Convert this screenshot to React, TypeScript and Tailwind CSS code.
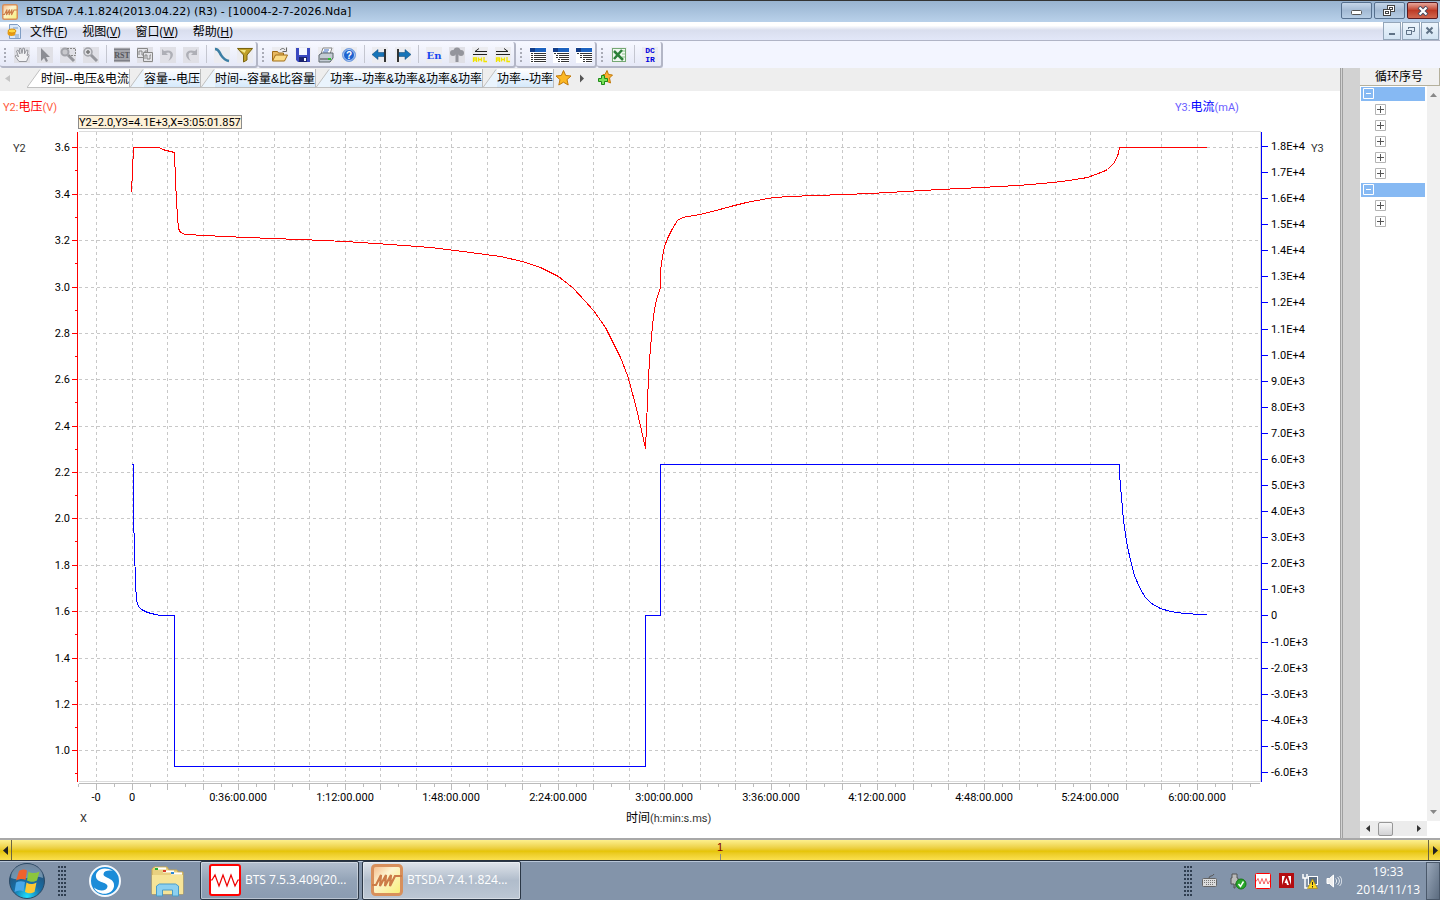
import type { ReactNode } from "react";

const UI = "font-['Open_Sans','Noto_Sans_CJK_SC',sans-serif]";
const ARIAL = "font-['Liberation_Sans','Noto_Sans_CJK_SC',sans-serif]";

/* ---------- shared drawings ---------- */

function WaveLogo({ size }: { size: number }) {
    return (
        <svg width={size} height={size} viewBox="0 0 32 32" className="shrink-0">
            <defs>
                <linearGradient id={"wl" + size} x1="0" y1="0" x2="1" y2="1">
                    <stop offset="0" stopColor="#f4b888" />
                    <stop offset="0.4" stopColor="#fdf4d0" />
                    <stop offset="1" stopColor="#f8f070" />
                </linearGradient>
            </defs>
            <rect x="1.5" y="1.5" width="29" height="29" rx="3" fill={"url(#wl" + size + ")"} stroke="#d8905c" strokeWidth="3" />
            <path d="M1 21h4l5-10-1 11 6-11-1 11 6-11-1 11 5-10h7" fill="none" stroke="#cc7c48" strokeWidth="2.2" />
        </svg>
    );
}

function RedWave({ size }: { size: number }) {
    return (
        <svg width={size} height={size} viewBox="0 0 32 32" className="shrink-0">
            <rect x="1" y="1" width="30" height="30" rx="2" fill="#fff" stroke="#f00" strokeWidth="2" />
            <path d="M1 16h2l3-5 4 11 4-11 4 11 4-11 4 11 3-6h3" fill="none" stroke="#e00" strokeWidth="1.2" />
        </svg>
    );
}

/* ---------- title + menu ---------- */

const winBtn = "flex h-[17px] w-[31px] items-center justify-center rounded-[2px] border border-[#56708e] bg-linear-to-b from-[#c5d6e9] via-[#a3bad4] to-[#b7cde4]";

function TitleBar() {
    return (
        <header className="flex h-[22px] shrink-0 items-center border-t border-[#333] bg-linear-to-b from-[#98b3d0] to-[#b9d1ea] pr-0.5 pl-0.5 text-black">
            <WaveLogo size={16} />
            <h1 className="ml-2 flex-1 font-['DejaVu_Sans',sans-serif] text-[11px] leading-5 whitespace-nowrap">BTSDA 7.4.1.824(2013.04.22) (R3) - [10004-2-7-2026.Nda]</h1>
            <div className="flex gap-0.5 pb-0.5">
                <button aria-label="Minimize" className={winBtn}>
                    <svg width="12" height="10"><rect x="0.5" y="4.5" width="10" height="4" rx="1" fill="#fff" stroke="#555" /></svg>
                </button>
                <button aria-label="Restore" className={winBtn}>
                    <svg width="13" height="12" fill="#fff" stroke="#444">
                        <rect x="4.5" y="0.5" width="7" height="6" />
                        <rect x="6.5" y="2.5" width="3" height="2" />
                        <rect x="0.5" y="4.5" width="7" height="6" />
                        <rect x="2.5" y="6.5" width="3" height="2" />
                    </svg>
                </button>
                <button aria-label="Close" className="flex h-[17px] w-[31px] items-center justify-center rounded-[2px] border border-[#5a1a20] bg-linear-to-b from-[#e6a59a] via-[#bd3a26] to-[#d0674f]">
                    <svg width="12" height="10">
                        <path d="M2 1l8 8M10 1l-8 8" stroke="#444a60" strokeWidth="4" />
                        <path d="M2.5 1.5l7 7M9.5 1.5l-7 7" stroke="#fff" strokeWidth="2.2" />
                    </svg>
                </button>
            </div>
        </header>
    );
}

const menus = [
    ["文件", "F"],
    ["视图", "V"],
    ["窗口", "W"],
    ["帮助", "H"],
];

const mdiBtn = "flex h-[18px] w-[18px] items-center justify-center border border-[#93a5b8] bg-linear-to-b from-[#edf5fc] to-[#d3e4f3]";

function MenuBar() {
    return (
        <nav className={"flex h-[19px] shrink-0 items-center border-b border-[#b0b4c6] bg-linear-to-b from-white from-20% via-[#d9deee] via-45% to-[#e2e7f8] pl-[7px] " + UI}>
            <svg width="14" height="15" viewBox="0 0 14 15" className="shrink-0">
                <path d="M2.5.5h8l3 3v11h-11z" fill="#dce9f8" stroke="#7f9dc4" />
                <path d="M6 4h5M6 11h6M8 13h4" stroke="#7f9dc4" />
                <ellipse cx="4.5" cy="9" rx="4" ry="3" fill="#e89a10" />
                <ellipse cx="5" cy="7" rx="4" ry="2" fill="#ffd840" stroke="#d88c10" />
            </svg>
            <div className="ml-[9px] flex flex-1 gap-[15px] pt-0.5 text-[12px] leading-4">
                {menus.map(([label, key]) => (
                    <button key={key} className="whitespace-nowrap">
                        {label}(<u>{key}</u>)
                    </button>
                ))}
            </div>
            <div className="flex gap-px pr-px">
                <button aria-label="Minimize document" className={mdiBtn}>
                    <svg width="10" height="10"><path d="M2 8h6" stroke="#5f7286" strokeWidth="2" /></svg>
                </button>
                <button aria-label="Restore document" className={mdiBtn}>
                    <svg width="10" height="10" fill="none" stroke="#5f7286"><path d="M2.5 3v-1.500h6v4h-2M2 1.5h7M.5 4.5h5v4h-5zM0 4.5h6" /></svg>
                </button>
                <button aria-label="Close document" className={mdiBtn}>
                    <svg width="10" height="10"><path d="M1.5 1.5l6 6M7.5 1.5l-6 6" stroke="#5f7286" strokeWidth="2" /></svg>
                </button>
            </div>
        </nav>
    );
}

/* ---------- toolbar ---------- */

function Tool({ label, children, muted = false }: { label: string; children: ReactNode; muted?: boolean }) {
    return (
        <button aria-label={label} className="flex w-[23px] items-center justify-center pt-0.5">
            <svg width="16" height="16" viewBox="0 0 16 16" className={muted ? "bg-[#e0e0e6]" : "bg-[#ececf0]"}>
                {children}
            </svg>
        </button>
    );
}

function Sep() {
    return (
        <div className="flex w-2 justify-center">
            <div className="h-[18px] w-px self-center bg-[#c4c6d0]" />
        </div>
    );
}

function ToolGroup({ children }: { children: ReactNode }) {
    return (
        <div className="flex rounded-[3px] border-r-2 border-b-2 border-[#b3b6c6] bg-linear-to-b from-[#f7f8ff] to-[#e6e9f7]">
            <svg width="10" height="24" fill="#a9abb6">
                {[6, 10, 14, 18].map((y) => (
                    <rect key={y} x="4" y={y} width="2" height="2" />
                ))}
            </svg>
            {children}
        </div>
    );
}

function TableIcon({ indent }: { indent: number }) {
    return (
        <g shapeRendering="crispEdges">
            <rect width="16" height="16" fill="#fff" />
            <rect x="0" y="1" width="16" height="4" fill="#1c62c0" />
            <rect x="0" y="1" width="5" height="4" fill="#123c88" />
            <path
                d={`M1 6.5h15M${1 + indent} 8.5h15M${1 + indent} 10.5h15M${1 + indent * 2} 12.5h15M${1 + indent * 2} 14.5h15`}
                stroke="#333"
                strokeDasharray="2 1 12 2"
            />
        </g>
    );
}

function Toolbar() {
    return (
        <div className="flex h-[27px] shrink-0 bg-[#f3f5ff] pt-px" role="toolbar">
            <ToolGroup>
                <Tool label="Pan" muted>
                    <path d="M5 14.500l-4-5.500 1.500-1 2 2-2-6 1.500-1 2 4L5.500 1.500h1.500l1 5 1-5.500 1.500.5V7l2-4 1.500.5-1 5 1.500-1 .5 1-2.500 6z" fill="#f2f2f4" stroke="#95969c" />
                </Tool>
                <Tool label="Select" muted>
                    <path d="M4 1v13l3-3 2 4 2-1-2-4h4z" fill="#8c8d94" />
                </Tool>
                <Tool label="Zoom area" muted>
                    <circle cx="5" cy="5" r="3.5" fill="#c8c8cc" stroke="#a2a3a9" strokeWidth="2" />
                    <path d="M8 8l6 6" stroke="#96979d" strokeWidth="3" />
                    <path d="M7 1.5h8.500v7H9" fill="none" stroke="#888" strokeDasharray="2 1" />
                </Tool>
                <Tool label="Zoom" muted>
                    <circle cx="5" cy="5" r="4" fill="#dcdce0" stroke="#a2a3a9" strokeWidth="1.5" />
                    <path d="M8 8l6 6" stroke="#96979d" strokeWidth="3" />
                    <path d="M3 5h4M5 3v4" stroke="#777" strokeWidth="1.5" />
                </Tool>
                <Sep />
                <Tool label="Reset" muted>
                    <rect y="1" width="16" height="14" fill="#a4a5ab" />
                    <path d="M0 2.5h16M0 13.500h16" stroke="#808188" />
                    <text x="8" y="11" textAnchor="middle" className="font-['Liberation_Serif',serif] text-[8px] font-bold" fill="#55565c">RST</text>
                </Tool>
                <Tool label="Copy curves" muted>
                    <path d="M.5 1.500h10v9H.5z" fill="#e4e4e8" stroke="#888" />
                    <path d="M2 8V4h3v4h3V4h2" fill="none" stroke="#888" />
                    <path d="M6.500 5.500h9v9h-9z" fill="#e4e4e8" stroke="#888" />
                    <path d="M8 12V8h2v4h3V8h1" fill="none" stroke="#888" />
                </Tool>
                <Tool label="Undo" muted>
                    <path d="M2 2v6h6L6 6c4-2 6 1 3 7l-1 1c8-4 6-13-4-10z" fill="#aeafb6" />
                </Tool>
                <Tool label="Redo" muted>
                    <path d="M14 2v6H8l2-2c-4-2-6 1-3 7l1 1C0 10 2 1 12 4z" fill="#aeafb6" />
                </Tool>
                <Sep />
                <Tool label="Curve">
                    <path d="M1 2c4 0 4 3 6 6s3 5 8 6" fill="none" stroke="#3c7ea4" strokeWidth="2.5" />
                </Tool>
                <Tool label="Filter">
                    <path d="M.5 1.500h15L10 8v5l-3.500 2V8z" fill="#c0a028" stroke="#7a6410" />
                    <path d="M3 3h6L7.500 6z" fill="#f4e888" />
                </Tool>
            </ToolGroup>
            <ToolGroup>
                <Tool label="Open">
                    <path d="M.5 13.500v-9h5l1 1.500h5v3" fill="#e8b860" stroke="#a06c18" />
                    <path d="M.5 14l3-6h12l-3 6z" fill="#fbdc88" stroke="#a06c18" />
                    <path d="M8 3c2-2 4-2 5 0M14.500.5v4h-4" fill="none" stroke="#666" />
                </Tool>
                <Tool label="Save">
                    <path d="M1 1h14v14H3l-2-2z" fill="#3a48c0" />
                    <rect x="4" y="1" width="8" height="7" fill="#f4f6ff" />
                    <rect x="4" y="10" width="8" height="5" fill="#1c2470" />
                    <rect x="9" y="11" width="2" height="3" fill="#fff" />
                </Tool>
                <Tool label="Print">
                    <path d="M5 1h9l-2 6H3z" fill="#fff" stroke="#888" />
                    <path d="M6 3h5M5 5h5" stroke="#3a68c0" />
                    <path d="M1 8l3-2h11v5l-3 4H1z" fill="#c4ccd4" stroke="#5a646c" />
                    <path d="M2 12h9" stroke="#444" />
                    <rect x="10" y="11" width="3" height="2" fill="#2ac030" />
                </Tool>
                <Tool label="Help">
                    <circle cx="8" cy="8" r="6.5" fill="#1d62d0" stroke="#7fa4e0" />
                    <circle cx="8" cy="8" r="5.5" fill="none" stroke="#dce8fa" strokeWidth="0.8" />
                    <text x="8" y="12" textAnchor="middle" className="font-['Liberation_Sans',sans-serif] text-[10px] font-bold" fill="#fff">?</text>
                </Tool>
                <Sep />
                <Tool label="Previous">
                    <path d="M13 2v13" stroke="#333" strokeWidth="2" />
                    <path d="M0 7.500l6-5v3h6v4H6v3z" fill="#1774b8" stroke="#0c4474" strokeWidth="0.5" />
                </Tool>
                <Tool label="Next">
                    <path d="M3 2v13" stroke="#333" strokeWidth="2" />
                    <path d="M16 7.500l-6-5v3H4v4h6v3z" fill="#1774b8" stroke="#0c4474" strokeWidth="0.5" />
                </Tool>
                <Sep />
                <Tool label="Language">
                    <text x="8" y="12" textAnchor="middle" className="font-['DejaVu_Serif',serif] text-[10px] font-bold" fill="#1646f0">En</text>
                </Tool>
                <Tool label="Tree" muted>
                    <circle cx="8" cy="4" r="3.5" fill="#94959c" />
                    <circle cx="4" cy="6" r="3" fill="#94959c" />
                    <circle cx="12" cy="6" r="3" fill="#94959c" />
                    <path d="M6.500 7h3v8h-3z" fill="#94959c" />
                </Tool>
                <Tool label="Charge left">
                    <path d="M15 4.500H3l4-3M1 7.500h14" fill="none" stroke="#222" />
                    <path d="M1.500 15v-4h3v4M1.500 13h3M6.500 10.500v4M9.500 10.500v4M6.500 12.500h3M12 10v4.500h3" fill="none" stroke="#f0e400" strokeWidth="1.3" />
                </Tool>
                <Tool label="Charge right">
                    <path d="M1 4.500h12l-4-3M1 7.500h14" fill="none" stroke="#222" />
                    <path d="M1.500 15v-4h3v4M1.500 13h3M6.500 10.500v4M9.500 10.500v4M6.500 12.500h3M12 10v4.500h3" fill="none" stroke="#f0e400" strokeWidth="1.3" />
                </Tool>
            </ToolGroup>
            <ToolGroup>
                <Tool label="Cycle layer"><TableIcon indent={0} /></Tool>
                <Tool label="Step layer"><TableIcon indent={2} /></Tool>
                <Tool label="Record layer"><TableIcon indent={3} /></Tool>
            </ToolGroup>
            <ToolGroup>
                <Tool label="Export to Excel">
                    <rect x="1.5" y="1.5" width="13" height="13" fill="#f0f8f0" stroke="#74a874" />
                    <path d="M11 4h3M11 7h3M11 10h3" stroke="#8cc08c" />
                    <path d="M3 4l9 9M11 3l-8 9" stroke="#2c8038" strokeWidth="2.5" />
                </Tool>
                <Sep />
                <Tool label="DCIR">
                    <text x="8" y="6" textAnchor="middle" className="font-['Liberation_Mono',monospace] text-[8px] font-bold" fill="#0000e0">DC</text>
                    <text x="8" y="15" textAnchor="middle" className="font-['Liberation_Mono',monospace] text-[8px] font-bold" fill="#0000e0">IR</text>
                </Tool>
            </ToolGroup>
        </div>
    );
}

/* ---------- tabs ---------- */

const tabs = ["时间--电压&电流", "容量--电压", "时间--容量&比容量", "功率--功率&功率&功率&功率", "功率--功率"];

function Tabs() {
    return (
        <div className={"flex h-[23px] shrink-0 items-start bg-[#eeeeee] pt-px text-[12px] " + ARIAL}>
            <svg width="27" height="18"><path d="M10 6v7L5 9.500z" fill="#c4c4c4" /></svg>
            {tabs.map((tab, i) => (
                <button key={tab} className="flex h-[19px] whitespace-nowrap">
                    <svg width="14" height="19">
                        <path d="M0 18.500L13 0.500h2v18z" fill={i === 0 ? "#fff" : "#eaf4fd"} />
                        <path d="M0 18.500L13 0.500M0 18.500h14" stroke="#c0c0c0" />
                    </svg>
                    <span
                        className={
                            "h-[19px] border-r border-b border-[#bcbcbc] leading-5 " +
                            (i === 0 ? "bg-white" : "bg-linear-to-b from-white to-[#d5e9fb]")
                        }
                    >
                        {tab}
                    </span>
                </button>
            ))}
            <button aria-label="Favourite" className="ml-px">
                <svg width="17" height="18" viewBox="0 0 17 18">
                    <path d="M8.500 1.500l2.200 5 5.300.5-4 3.600 1.200 5.400-4.700-2.800L3.800 16 5 10.600 1 7l5.300-.5z" fill="#fcb824" stroke="#c07808" />
                </svg>
            </button>
            <svg width="16" height="18"><path d="M8 5.500v8l4-4z" fill="#555" /></svg>
            <button aria-label="Add favourite" className="ml-2">
                <svg width="18" height="18" viewBox="0 0 18 18">
                    <path d="M11 1.500l1.500 4 4 .5-3 3 1 5-4.500-2-3 1V5.500h2z" fill="#fcb030" stroke="#c07808" />
                    <path d="M5.500 6.500h3v3h3v3h-3v3h-3v-3h-3v-3h3z" fill="#78e058" stroke="#1e8a18" />
                </svg>
            </button>
        </div>
    );
}

/* ---------- chart ---------- */

const voltTicks = [147, 194, 240, 287, 333, 379, 426, 472, 518, 565, 611, 658, 704, 750];
const gridX = Array.from({ length: 33 }, (_, i) => Math.floor(96.5 + 35.5 * i));
const currents = Array.from({ length: 25 }, (_, i) => 18 - i);
const times = ["0", "0:36:00.000", "1:12:00.000", "1:48:00.000", "2:24:00.000", "3:00:00.000", "3:36:00.000", "4:12:00.000", "4:48:00.000", "5:24:00.000", "6:00:00.000"];

const voltage =
    "131,192 132,170 133,147 159,147 162,149 174,152 175,180 176,200 177,217 178,228 180,232 185,234 205,235 223,236 247,237 271,238 300,239 345,241 390,244 430,247 470,252 500,256 522,261 540,267 558,276 572,287 585,301 593,310 605,327 613,343 620,357 627,375 629,382 636,408 641,430 645,448 " +
    "646,425 647,400 648,378 649,360 651,336 653,315 656,299 660,287 660,270 662,256 664,246 667,238 672,228 677,220 682,217 699,214 712,211 730,206 746,202 767,198 774,197 789,196 815,195 845,194 869,193 889,192 905,191 922,190 940,189 960,188 981,187 999,186 1017,185 1031,184 1040,183 1053,182 1069,180 1087,177 1103,171 1107,169 1114,162 1118,153 1119,147 1206,147";

const current =
    "131,464 133,464 133,515 134,549 135,582 136,600 138,606 141,609 147,612 155,614 160,615 174,615 174,766 645,766 645,615 660,615 660,464 1119,464 1119,474 1121,497 1123,520 1126,541 1130,560 1134,575 1139,587 1145,597 1151,603 1160,608 1170,611 1184,613 1200,614 1206,614";

function currentLabel(k: number) {
    if (k === 0) return "0";
    return Math.abs(k) >= 10 ? `${(k / 10).toFixed(1)}E+4` : `${k.toFixed(1)}E+3`;
}

function currentY(i: number) {
    return Math.round(146 + 26.08 * i);
}

function Chart() {
    return (
        <svg viewBox="0 91 1340 747" className="block min-h-0 w-full flex-1 bg-white font-['Roboto','Noto_Sans_CJK_SC',sans-serif] text-[11px]">
            {/* grid and frame */}
            <g transform="translate(0.5 0.5)" fill="none" shapeRendering="crispEdges">
                <path d="M78 131H1260V781H78" stroke="#dcdcdc" />
                <g stroke="#c8c8c8" strokeDasharray="3 3">
                    {voltTicks.map((y) => <path key={y} d={`M78 ${y}H1259`} />)}
                    {gridX.map((x) => <path key={x} d={`M${x} 131V781`} />)}
                </g>
                <path d="M78 783H1259" stroke="#bbb" />
                {gridX.map((x) => <path key={x} d={`M${x} 783v6M${x + 18} 783v3`} stroke="#bbb" />)}
                <path d="M78 783v3" stroke="#bbb" />
                <path d="M77 131V781" stroke="#f00" />
                {voltTicks.map((y) => <path key={y} d={`M71 ${y}h6M74 ${y + 23}h3`} stroke="#f00" />)}
                <path d="M1261 131V781" stroke="#00f" />
                {currents.map((k, i) => <path key={k} d={`M1261 ${currentY(i)}h6`} stroke="#00f" />)}
                <polyline points={voltage} stroke="#f00" />
                <polyline points={current} stroke="#00f" />
            </g>

            {/* axis labels */}
            {voltTicks.map((y, i) => (
                <text key={y} x="70" y={y + 4} textAnchor="end">{(3.6 - i * 0.2).toFixed(1)}</text>
            ))}
            {currents.map((k, i) => (
                <text key={k} x="1271" y={currentY(i) + 4}>{currentLabel(k)}</text>
            ))}
            <text x="96" y="801" textAnchor="middle">-0</text>
            {times.map((t, i) => (
                <text key={t} x={Math.floor(132 + 106.5 * i)} y="801" textAnchor="middle">{t}</text>
            ))}
            <text x="13" y="152" fill="#333">Y2</text>
            <text x="1311" y="152" fill="#333">Y3</text>
            <text x="80" y="822" fill="#333">X</text>
            <text x="626" y="822" fill="#333"><tspan className="text-[12px]" fill="#000">时间</tspan>(h:min:s.ms)</text>
            <text x="3" y="111" fill="#ff5a3c">Y2:<tspan className="text-[12px]" fill="#f00">电压</tspan>(V)</text>
            <text x="1175" y="111" fill="#6a5cff">Y3:<tspan className="text-[12px]" fill="#00f">电流</tspan>(mA)</text>

            {/* cursor readout */}
            <rect x="78.5" y="115.5" width="163" height="13" fill="#fdf1d8" stroke="#8c8c8c" />
            <text x="79" y="126">Y2=2.0,Y3=4.1E+3,X=3:05:01.857</text>
        </svg>
    );
}

/* ---------- cycle tree ---------- */

const tree = [5, 2];

function CyclePanel() {
    return (
        <aside className={"flex w-20 shrink-0 flex-col bg-white text-[12px] " + ARIAL}>
            <h2 className="h-[18px] border-r border-b border-[#b4b09c] bg-[#f0f0f0] pl-[15px] leading-[18px]">循环序号</h2>
            <div className="flex min-h-0 flex-1">
                <ul className="flex-1 pl-px">
                    {tree.map((n, i) => (
                        <li key={i} className="py-px">
                            <div className="mr-0.5 flex h-3.5 items-start bg-[#86b9f3] pt-px pl-0.5">
                                <button aria-label="Collapse">
                                    <svg width="11" height="11" className="block"><path d="M.5.5h10v10H.5zM3 5.500h5" fill="none" stroke="#fff" /></svg>
                                </button>
                            </div>
                            <ul>
                                {Array.from({ length: n }, (_, j) => (
                                    <li key={j} className="flex h-4 items-center pl-3.5">
                                        <button aria-label="Expand">
                                            <svg width="11" height="11" className="block" fill="none">
                                                <path d="M.5.5h10v10H.5z" stroke="#b4b4b4" />
                                                <path d="M2 5.500h7M5.500 2v7" stroke="#555" />
                                            </svg>
                                        </button>
                                    </li>
                                ))}
                            </ul>
                        </li>
                    ))}
                </ul>
                <div className="flex w-[13px] flex-col items-center justify-between bg-[#f0f0f0] py-[7px]">
                    <svg width="7" height="4"><path d="M0 4l3.500-4L7 4z" fill="#888" /></svg>
                    <svg width="7" height="4"><path d="M0 0l3.500 4L7 0z" fill="#888" /></svg>
                </div>
            </div>
            <div className="mr-[13px] mb-0.5 flex h-[15px] items-center bg-[#ececec] px-1.5">
                <svg width="4" height="7"><path d="M4 0v7L0 3.500z" fill="#333" /></svg>
                <div className="ml-2 h-3.5 w-[15px] rounded-[2px] border border-[#979797] bg-linear-to-b from-[#f6f6f6] to-[#d2d2d4]" />
                <svg width="4" height="7" className="ml-auto"><path d="M0 0v7l4-3.500z" fill="#333" /></svg>
            </div>
        </aside>
    );
}

/* ---------- cycle slider ---------- */

function CycleBar() {
    return (
        <div className={"flex h-[22px] shrink-0 border-t-2 border-[#a8a8a8] bg-linear-to-b from-[#fdf08c] via-[#e6c400] via-55% to-[#fbe04c] text-[11px] " + ARIAL}>
            <button aria-label="Previous cycle" className="flex w-3 items-center justify-center border-r border-[#6c6440]">
                <svg width="6" height="9"><path d="M5 0v9L0 4.500z" fill="#222" /></svg>
            </button>
            <div className="flex flex-1 flex-col items-center leading-[14px] text-[#800000]">
                1
                <div className="h-1.5 w-px bg-[#888]" />
            </div>
            <button aria-label="Next cycle" className="flex w-3 items-center justify-center border-l border-[#6c6440]">
                <svg width="6" height="9"><path d="M1 0v9l5-4.500z" fill="#222" /></svg>
            </button>
        </div>
    );
}

/* ---------- taskbar ---------- */

function DotGrip() {
    return (
        <svg width="9" height="32" fill="#2f3e50">
            {[0, 3, 6].map((x) =>
                Array.from({ length: 8 }, (_, i) => <rect key={x + "-" + i} x={x} y={1 + i * 4} width="2" height="2" />)
            )}
        </svg>
    );
}

const taskBtn = "flex h-[39px] w-[159px] items-center gap-1 rounded-[2px] border border-[#2b3746] pb-0.5 pl-2 shadow-[inset_0_0_0_1px_#ffffff66]";

function TaskBar() {
    return (
        <footer className={"flex h-10 shrink-0 items-center border-t border-[#26303c] bg-[#8394aa] text-[12px] text-white shadow-[inset_0_1px_0_#b8c6d8] " + UI}>
            <button aria-label="Start" className="ml-2">
                <svg width="38" height="38" viewBox="0 0 38 38" className="block">
                    <defs>
                        <radialGradient id="orb" cx="0.5" cy="0.95" r="0.9">
                            <stop offset="0" stopColor="#20e0ff" />
                            <stop offset="0.45" stopColor="#1670a8" />
                            <stop offset="1" stopColor="#2a4a6c" />
                        </radialGradient>
                    </defs>
                    <circle cx="19" cy="19" r="17.5" fill="url(#orb)" stroke="#2c4a66" />
                    <path d="M3 16a16 14 0 0 1 32 0c-10-4-22 4-32 0z" fill="#fff" opacity="0.35" />
                    <path d="M11 9c3-2 6-2 8-.5L17.500 18c-3-1.500-6-1-9.500.5z" fill="#f0622c" />
                    <path d="M20.500 9.500c3 2 7 2 11 0L29 18.500c-4 2-6 1.500-10 0z" fill="#8cc63c" />
                    <path d="M8 20.500c3-1.500 6-1.500 9-.5l-1.500 9.500c-3-1.500-6-1-9 .5z" fill="#4aa8e8" />
                    <path d="M18.500 20.500c3 2 6 2 10 0l-2 9.500c-4 2-6 1.500-9.500 0z" fill="#fcc834" />
                </svg>
            </button>
            <div className="ml-3"><DotGrip /></div>
            <button aria-label="Browser" className="ml-[22px]">
                <svg width="32" height="32" viewBox="0 0 32 32" className="block">
                    <circle cx="16" cy="16" r="15" fill="#1c8cd8" stroke="#f4f8fc" strokeWidth="2" />
                    <path d="M24 6C14 0 6 6 7 12c1 6 12 5 11.500 9.500-.5 5-9 5-13.500 1 3 8 18 9 20-1 1.500-9-11-8-10.500-12.500C15 5.500 20 5 24 6z" fill="#fff" />
                </svg>
            </button>
            <button aria-label="Explorer" className="ml-[30px]">
                <svg width="33" height="32" viewBox="0 0 33 32" className="block">
                    <path d="M1 4l2-2h13l2 3h8l1 2h5v22H1z" fill="#e8d080" stroke="#c8a850" />
                    <path d="M4 3.500h11M12 6.500h11M20 8.500h11" stroke="#fff" strokeWidth="2" />
                    <rect x="4" y="3" width="3" height="2" fill="#28b030" />
                    <rect x="12" y="5" width="3" height="2" fill="#d83c28" />
                    <rect x="20" y="7" width="3" height="2" fill="#2c88d8" />
                    <path d="M1 10h31v19H1z" fill="#f6e498" />
                    <path d="M5.500 31V21l3-2h16l3 2v10h-6v-6h-10v6z" fill="#8cd0f0" stroke="#4a9cc8" />
                </svg>
            </button>
            <button className={"ml-4 bg-linear-to-b from-[#b4c0cf] via-[#93a3b7] to-[#8a9bb1] " + taskBtn}>
                <RedWave size={32} />
                <span>BTS 7.5.3.409(20...</span>
            </button>
            <button className={"ml-[3px] bg-linear-to-b from-[#dfe4ea] via-[#b0bccb] to-[#bcc7d4] " + taskBtn}>
                <WaveLogo size={32} />
                <span>BTSDA 7.4.1.824...</span>
            </button>
            <div className="ml-auto flex items-center gap-2">
                <DotGrip />
                <svg width="17" height="17" viewBox="0 0 17 17">
                    <path d="M8 6c0-3 4-1 5-4" fill="none" stroke="#555" />
                    <rect x="1.5" y="6.5" width="14" height="8" rx="1" fill="#ddd" stroke="#666" />
                    <path d="M3 8.500h11M3 10.500h11M5 12.500h7" stroke="#777" strokeDasharray="1 1" />
                </svg>
            </div>
            <div className="ml-3 flex items-center gap-2">
                <svg width="17" height="18" viewBox="0 0 17 18">
                    <path d="M2 2h5v4h1v6H5v4H4v-4H1V6h1z" fill="#bbb" stroke="#555" />
                    <circle cx="11" cy="12" r="5" fill="#28a828" stroke="#187818" />
                    <path d="M8.500 12l2 2.500 3-5" fill="none" stroke="#fff" strokeWidth="1.5" />
                </svg>
                <RedWave size={16} />
                <svg width="15" height="15" viewBox="0 0 15 15">
                    <rect width="15" height="15" fill="#b40c10" />
                    <path d="M3 12V3h3zM12 12V3H9zM7.500 5l2.500 7H8L7.300 10H5.500z" fill="#fff" />
                </svg>
                <svg width="16" height="16" viewBox="0 0 16 16">
                    <path d="M1 1v4h4V1M3 5v10h4" fill="none" stroke="#fff" strokeWidth="1.5" />
                    <rect x="6.5" y="3.5" width="9" height="8" fill="#5a6c80" stroke="#fff" />
                    <path d="M10.500 6l5 9.500h-10z" fill="#fcd820" stroke="#a88408" strokeWidth="0.6" />
                    <path d="M10.500 9v3M10.500 13v1.500" stroke="#222" />
                </svg>
                <svg width="16" height="16" viewBox="0 0 16 16">
                    <path d="M1 5.500h2.500L7.500 2v12l-4-3.500H1z" fill="#eee" stroke="#fff" />
                    <path d="M9.500 5.500c1.500 1.500 1.500 3.500 0 5M11.500 4c2.500 2.500 2.500 5.500 0 8M13.500 3c3 3 3 7 0 10" fill="none" stroke="#e4eaf0" />
                </svg>
            </div>
            <div className="ml-3.5 text-center leading-[18px]">
                <div>19:33</div>
                <div>2014/11/13</div>
            </div>
            <button aria-label="Show desktop" className="ml-1.5 h-[38px] w-3.5 border border-[#4a586a] bg-linear-to-br from-[#9aa8ba] to-[#5c6c80]" />
        </footer>
    );
}

export default function App() {
    return (
        <div className="flex h-screen flex-col overflow-hidden bg-white text-black">
            <TitleBar />
            <MenuBar />
            <Toolbar />
            <main className="flex min-h-0 flex-1">
                <section className="flex min-w-0 flex-1 flex-col">
                    <Tabs />
                    <Chart />
                </section>
                <div className="w-5 shrink-0 border-l-3 border-double border-[#a0a0a0] bg-[#d2d2d2]" />
                <CyclePanel />
            </main>
            <CycleBar />
            <TaskBar />
        </div>
    );
}
